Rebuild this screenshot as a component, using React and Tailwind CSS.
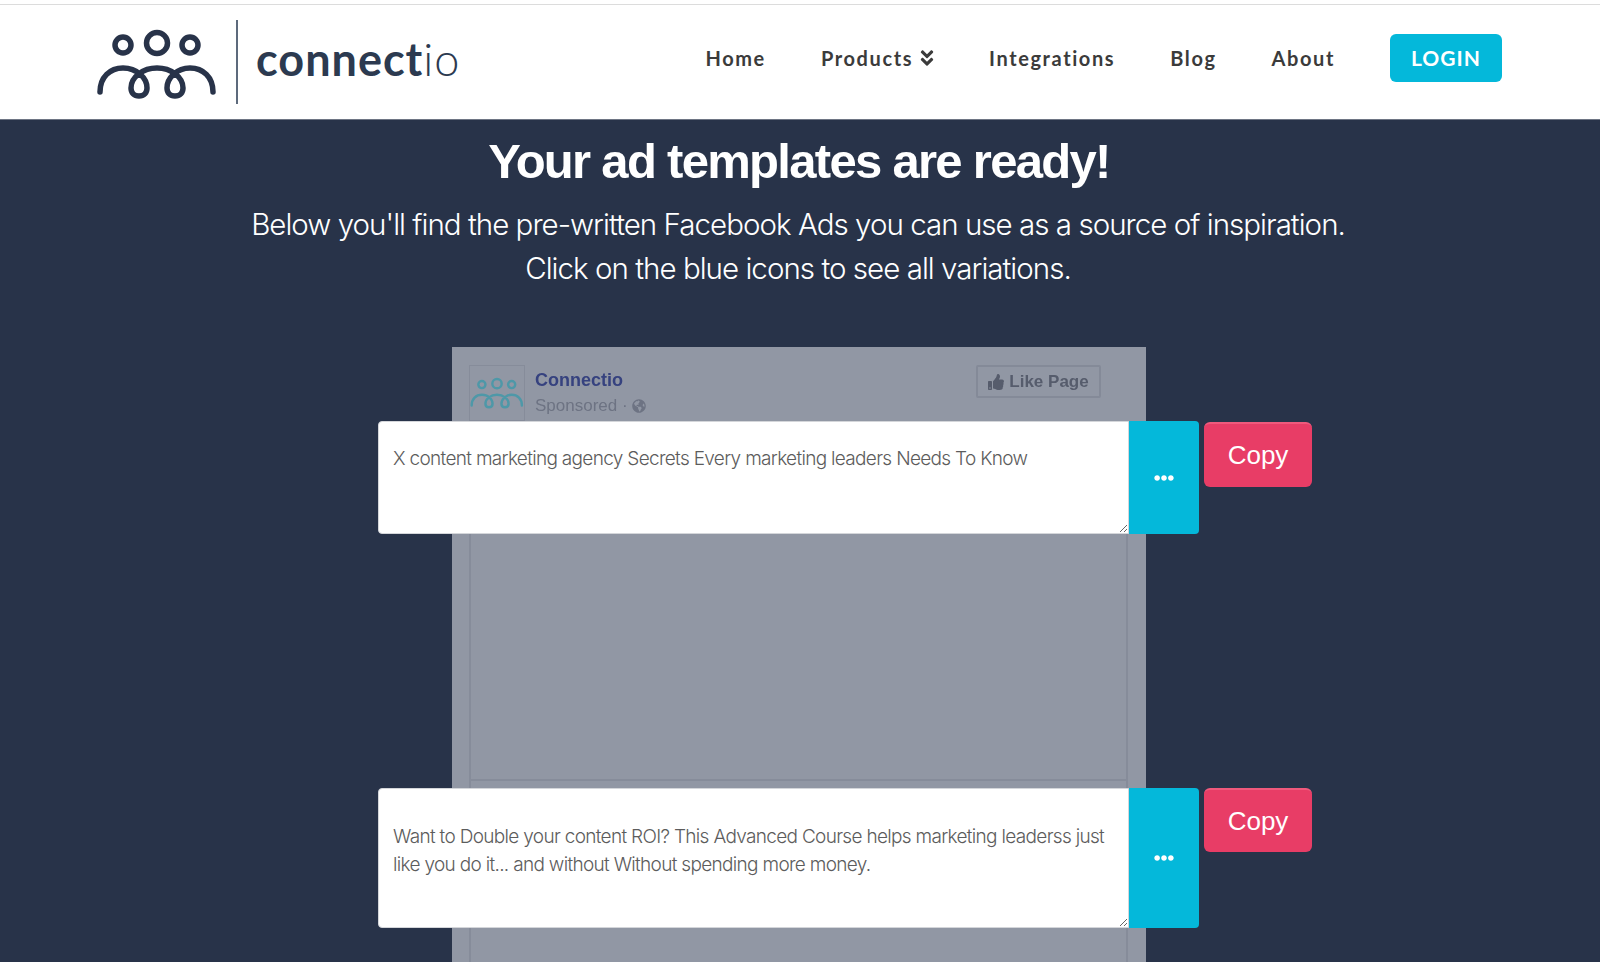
import React from 'react';
import { FaAngleDoubleDown, FaEllipsisH, FaGlobeAmericas, FaThumbsUp } from 'react-icons/fa';

const navItems = ['Home', 'Integrations', 'Blog', 'About'];

const LogoMark = ({ className }) => (
  <svg viewBox="0 0 120 72" fill="none" stroke="currentColor" strokeWidth="5.5" strokeLinecap="round" className={className}>
    <circle cx="26" cy="17" r="8" />
    <circle cx="60" cy="15" r="10.5" />
    <circle cx="93" cy="17" r="8" />
    <path d="M3 64 C3 49 13 40 26 40 C40 40 50 50 50 60 C50 65 47 68 42 68 C37 68 34 65 34 60 C34 49 46 40 60 40 C74 40 86 49 86 60 C86 65 83 68 78 68 C73 68 70 65 70 60 C70 50 80 40 93 40 C106 40 116 49 116 64" />
  </svg>
);

const AdRow = ({ text, rowClass, areaClass, copyClass, top }) => (
  <div className={`absolute left-[378px] flex items-start ${top}`}>
    <textarea
      readOnly
      defaultValue={text}
      className={`w-[751px] rounded-l-[4px] border border-[#d4d6da] bg-white px-[14px] font-['Inter',sans-serif] text-[19px] leading-[28px] font-light tracking-[-0.68px] text-[#5c5c5c] outline-none ${rowClass} ${areaClass}`}
    />
    <div className={`flex w-[70px] items-center justify-center rounded-r-[4px] bg-[#04b8da] text-white ${rowClass}`}>
      <FaEllipsisH className="text-[20px]" />
    </div>
    <button className={`ml-[5px] w-[108px] rounded-[6px] border-t-2 border-[#f0597c] bg-[#e83d66] font-['Liberation_Sans',sans-serif] text-[26px] text-white ${copyClass}`}>
      Copy
    </button>
  </div>
);

export default function App() {
  return (
    <div className="relative h-[962px] overflow-hidden bg-[#283349]">
      <header className="flex h-[120px] items-center border-b border-[#6e7584] bg-white pr-[98px] pl-[97px] shadow-[inset_0_4px_0_#fff,inset_0_5px_0_#dcdcdc]">
        <LogoMark className="mt-[8px] h-[72px] w-[120px] text-[#283349]" />
        <div className="mt-[4px] mr-[18px] ml-[19px] h-[84px] w-[2px] bg-[#5d6a7c]" />
        <div className="font-['Lato',sans-serif] text-[45px] leading-none font-bold tracking-[1px] text-[#2c3a50]">
          connect<span className="font-light">io</span>
        </div>
        <nav className="mb-[3px] ml-auto flex items-center gap-[55px] font-['Lato',sans-serif] text-[20px] font-bold tracking-[1.6px] text-[#3b3b3b]">
          <a>{navItems[0]}</a>
          <a className="-mr-[3px] flex items-center gap-[4px]">
            Products <FaAngleDoubleDown className="text-[20px]" />
          </a>
          <a>{navItems[1]}</a>
          <a>{navItems[2]}</a>
          <a>{navItems[3]}</a>
          <a className="flex h-[48px] w-[112px] items-center justify-center rounded-[6px] bg-[#04b8da] text-[21px] tracking-[1px] text-white">
            LOGIN
          </a>
        </nav>
      </header>

      <main className="text-center text-white">
        <h1 className="mt-[12px] pr-[2px] font-['Liberation_Sans',sans-serif] text-[49px] leading-[58px] font-bold tracking-[-1.7px]">
          Your ad templates are ready!
        </h1>
        <p className="mt-[12px] pr-[4px] font-['Inter',sans-serif] text-[29.5px] leading-[44px] font-light tracking-[-0.97px]">
          Below you'll find the pre-written Facebook Ads you can use as a source of inspiration.
          <br />
          Click on the blue icons to see all variations.
        </p>

        {/* blurred facebook ad preview behind the text fields */}
        <div className="mt-[57px] ml-[452px] h-[700px] w-[694px] bg-[#9197a4] pt-[18px] pr-[18px] pl-[17px] text-left font-['Liberation_Sans',sans-serif] blur-[0.4px]">
          <div className="flex items-start">
            <div className="flex h-[56px] w-[56px] items-center justify-center border border-[#868c9a]">
              <LogoMark className="h-[32px] w-[54px] text-[#4e98a8]" />
            </div>
            <div className="ml-[10px] pt-[3px]">
              <div className="text-[18px] leading-[24px] font-bold text-[#36427f]">Connectio</div>
              <div className="flex items-center gap-[4px] text-[17px] leading-[27px] text-[#6d7383]">
                Sponsored · <FaGlobeAmericas className="text-[14px]" />
              </div>
            </div>
            <div className="mr-[27px] ml-auto flex h-[33px] w-[125px] items-center justify-center gap-[5px] rounded-[2px] border-2 border-[#848a98] text-[17px] font-bold text-[#565c6c]">
              <FaThumbsUp className="text-[16px]" /> Like Page
            </div>
          </div>
          <div className="mt-[4px] h-[356px] border-x-2 border-b-2 border-[#868c9a]" />
          <div className="h-[300px] border-x-2 border-[#868c9a]" />
        </div>
      </main>

      <AdRow
        top="top-[421px]"
        rowClass="h-[113px]"
        areaClass="pt-[23px]"
        copyClass="mt-[1px] h-[65px]"
        text="X content marketing agency Secrets Every marketing leaders Needs To Know"
      />
      <AdRow
        top="top-[788px]"
        rowClass="h-[140px]"
        areaClass="pt-[34px]"
        copyClass="h-[64px]"
        text="Want to Double your content ROI? This Advanced Course helps marketing leaderss just like you do it... and without Without spending more money."
      />
    </div>
  );
}
